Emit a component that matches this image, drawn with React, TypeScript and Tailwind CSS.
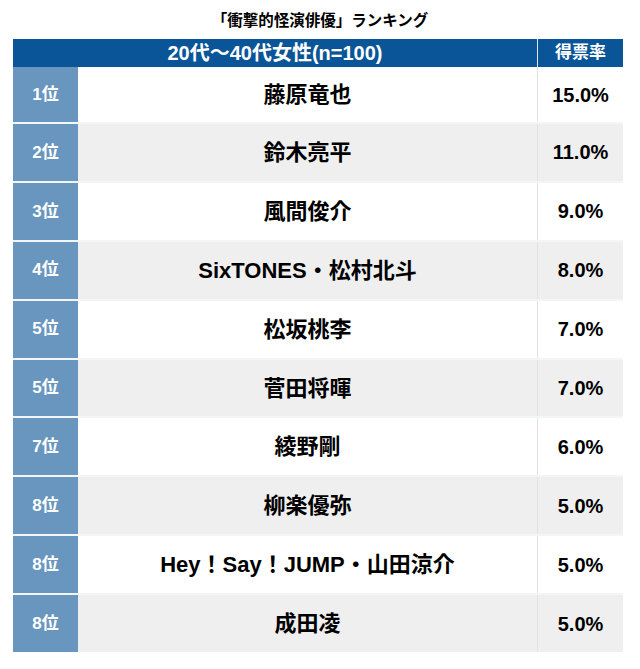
const rows = [
  { rank: "1位", name: "藤原竜也", rate: "15.0%" },
  { rank: "2位", name: "鈴木亮平", rate: "11.0%" },
  { rank: "3位", name: "風間俊介", rate: "9.0%" },
  { rank: "4位", name: "SixTONES・松村北斗", rate: "8.0%" },
  { rank: "5位", name: "松坂桃李", rate: "7.0%" },
  { rank: "5位", name: "菅田将暉", rate: "7.0%" },
  { rank: "7位", name: "綾野剛", rate: "6.0%" },
  { rank: "8位", name: "柳楽優弥", rate: "5.0%" },
  { rank: "8位", name: "Hey！Say！JUMP・山田涼介", rate: "5.0%" },
  { rank: "8位", name: "成田凌", rate: "5.0%" },
]

export default function App() {
  return (
    <div
      className="w-[640px] h-[669px] bg-white text-black overflow-hidden"
      style={{ fontFamily: '"Liberation Sans", "Noto Sans CJK JP", sans-serif' }}
    >
      <h1 className="h-[39px] pt-[11px] text-center text-[15.5px] leading-[20px] font-bold">
        「衝撃的怪演俳優」ランキング
      </h1>

      <div className="mx-[13px] w-[610px]">
        {/* header */}
        <div className="flex h-[28px] text-white font-bold">
          <div className="w-[524px] bg-[#0a5597] flex items-center justify-center text-[20px]">
            20代〜40代女性(n=100)
          </div>
          <div className="w-[1px] bg-[#dfe8f0]" />
          <div className="flex-1 bg-[#0a5597] flex items-center justify-center text-[17px]">得票率</div>
        </div>

        {rows.map((r, i) => (
          <div
            key={i}
            className={`flex ${i === 0 ? "h-[55px]" : "h-[58.9px] border-t-2 border-[#f3f6f9]"} ${
              i % 2 === 1 ? "bg-[#efefef]" : "bg-white"
            }`}
          >
            <div className="w-[65px] bg-[#6896be] flex items-center justify-center text-white font-bold text-[17px]">
              {r.rank}
            </div>
            <div className="w-[459px] flex items-center justify-center font-bold text-[22px] whitespace-nowrap">
              {r.name}
            </div>
            <div className="flex-1 border-l border-[#e3e3e3] flex items-center justify-center font-bold text-[20px]">
              {r.rate}
            </div>
          </div>
        ))}
      </div>
    </div>
  )
}
